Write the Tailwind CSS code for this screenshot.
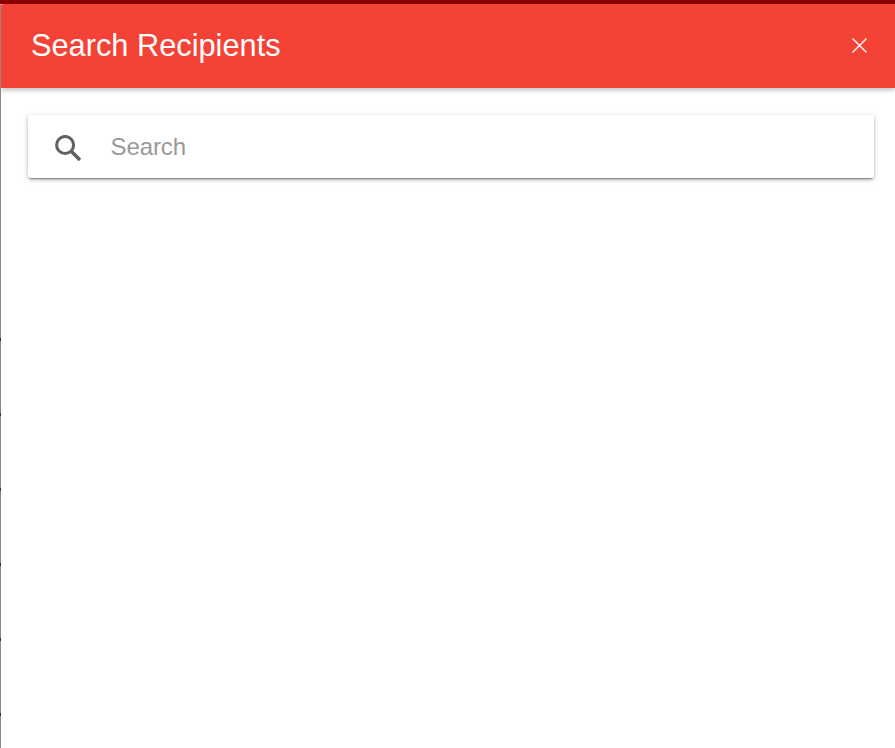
<!DOCTYPE html>
<html lang="en"><head><meta charset="utf-8"><title>Search Recipients</title>
<script src="https://cdn.jsdelivr.net/npm/@tailwindcss/browser@4"></script></head>
<body class="h-[748px] overflow-hidden bg-white font-['Liberation_Sans',Arial,sans-serif]">
<div class="flex h-full flex-col border-t-4 border-t-[#8b0000]">
<div class="flex min-h-0 flex-1">
<!-- sliver of the list behind the panel, with its row dividers -->
<div class="flex w-px shrink-0 flex-col bg-[#8a8a8a] pt-[334px]">
<div class="h-[75px] shrink-0 bg-linear-to-b from-[#333] from-[3px] to-[#8a8a8a] to-[3px]"></div>
<div class="h-[75px] shrink-0 bg-linear-to-b from-[#333] from-[3px] to-[#8a8a8a] to-[3px]"></div>
<div class="h-[75px] shrink-0 bg-linear-to-b from-[#333] from-[3px] to-[#8a8a8a] to-[3px]"></div>
<div class="h-[75px] shrink-0 bg-linear-to-b from-[#333] from-[3px] to-[#8a8a8a] to-[3px]"></div>
<div class="h-[75px] shrink-0 bg-linear-to-b from-[#333] from-[3px] to-[#8a8a8a] to-[3px]"></div>
<div class="h-[35px] shrink-0 bg-linear-to-b from-[#333] from-[3px] to-[#8a8a8a] to-[3px]"></div>
</div>
<div class="min-w-0 flex-1 overflow-hidden rounded-tl-[2px]">
<header class="flex h-[84px] items-center justify-between bg-[#f44336] pl-[30px] pr-[28px] text-white shadow-[0_2px_5px_rgba(0,0,0,0.26)]">
<h1 class="text-[30.75px] leading-[36px]">Search Recipients</h1>
<button aria-label="Close" class="mb-[2px]"><svg class="block size-[15px]" viewBox="0 0 15 15" fill="none" stroke="currentColor" stroke-width="1.4"><path d="M.5.5l14 14M14.5.5l-14 14"/></svg></button>
</header>
<main class="pl-[27px] pr-[21px] pt-[27px]">
<label class="flex h-[63px] items-center rounded-[3px] bg-white pl-[27px] shadow-[0_3px_1px_-2px_rgba(0,0,0,0.3),0_2px_3px_rgba(0,0,0,0.2),0_1px_6px_rgba(0,0,0,0.16)]">
<svg class="mt-[3px] size-[26px] shrink-0 text-[#616161]" viewBox="0 0 26 26" fill="none" stroke="currentColor"><circle cx="10.1" cy="10" r="8.5" stroke-width="3.1"/><path d="M16 16l9 9" stroke-width="3.6"/></svg>
<span class="ml-[29.5px] text-[24px] tracking-[-0.1px] text-[#999]">Search</span>
</label></main></div></div></div></body></html>
